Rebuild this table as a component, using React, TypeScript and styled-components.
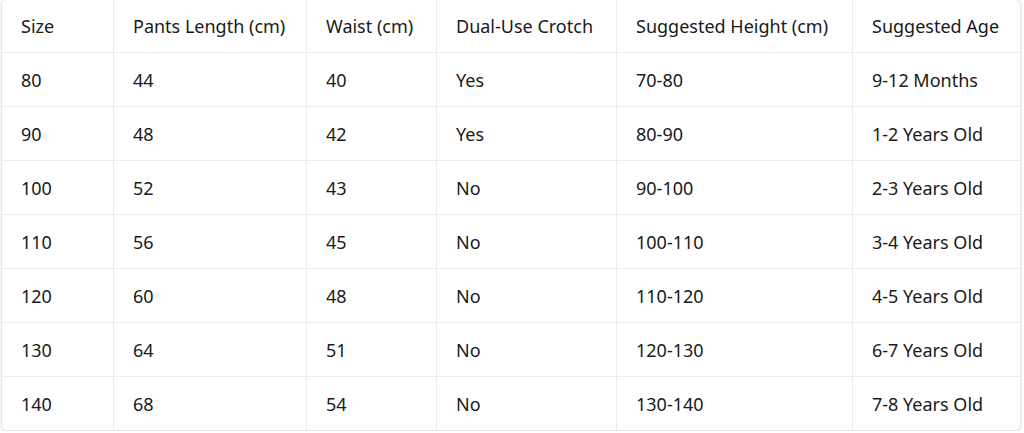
import React from "react";
import styled, { createGlobalStyle } from "styled-components";

const Global = createGlobalStyle`
  html, body { margin: 0; padding: 0; background: #ffffff; }
  body { font-family: "Noto Sans", "Open Sans", "DejaVu Sans", sans-serif; }
`;

const Card = styled.div`
  box-sizing: border-box;
  width: 1020px;
  margin: -1px 0 0 1px;
  border: 1px solid #e6e6e6;
  border-radius: 6px;
  box-shadow: 0 1px 3px rgba(0, 0, 0, 0.12);
  overflow: hidden;
  background: #fff;
`;

const Row = styled.div<{ $header?: boolean; $last?: boolean }>`
  display: grid;
  grid-template-columns: 112px 193px 130px 180px 236px 1fr;
  height: ${(p) => (p.$header ? 53 : p.$last ? 53 : 54)}px;
  box-sizing: border-box;
  border-bottom: ${(p) => (p.$last ? "none" : "1px solid #ececec")};
`;

const Cell = styled.div<{ $end?: boolean }>`
  box-sizing: border-box;
  display: flex;
  align-items: center;
  padding-left: 19px;
  border-right: ${(p) => (p.$end ? "none" : "1px solid #ececec")};
  font-size: 18px;
  color: #1a1a1a;
  white-space: nowrap;
`;

const headers = [
  "Size",
  "Pants Length (cm)",
  "Waist (cm)",
  "Dual-Use Crotch",
  "Suggested Height (cm)",
  "Suggested Age",
];

const rows = [
  ["80", "44", "40", "Yes", "70-80", "9-12 Months"],
  ["90", "48", "42", "Yes", "80-90", "1-2 Years Old"],
  ["100", "52", "43", "No", "90-100", "2-3 Years Old"],
  ["110", "56", "45", "No", "100-110", "3-4 Years Old"],
  ["120", "60", "48", "No", "110-120", "4-5 Years Old"],
  ["130", "64", "51", "No", "120-130", "6-7 Years Old"],
  ["140", "68", "54", "No", "130-140", "7-8 Years Old"],
];

export default function App() {
  return (
    <>
      <Global />
      <Card>
        <Row $header>
          {headers.map((h, i) => (
            <Cell key={h} $end={i === headers.length - 1}>
              {h}
            </Cell>
          ))}
        </Row>
        {rows.map((r, ri) => (
          <Row key={r[0]} $last={ri === rows.length - 1}>
            {r.map((c, i) => (
              <Cell key={i} $end={i === r.length - 1}>
                {c}
              </Cell>
            ))}
          </Row>
        ))}
      </Card>
    </>
  );
}
